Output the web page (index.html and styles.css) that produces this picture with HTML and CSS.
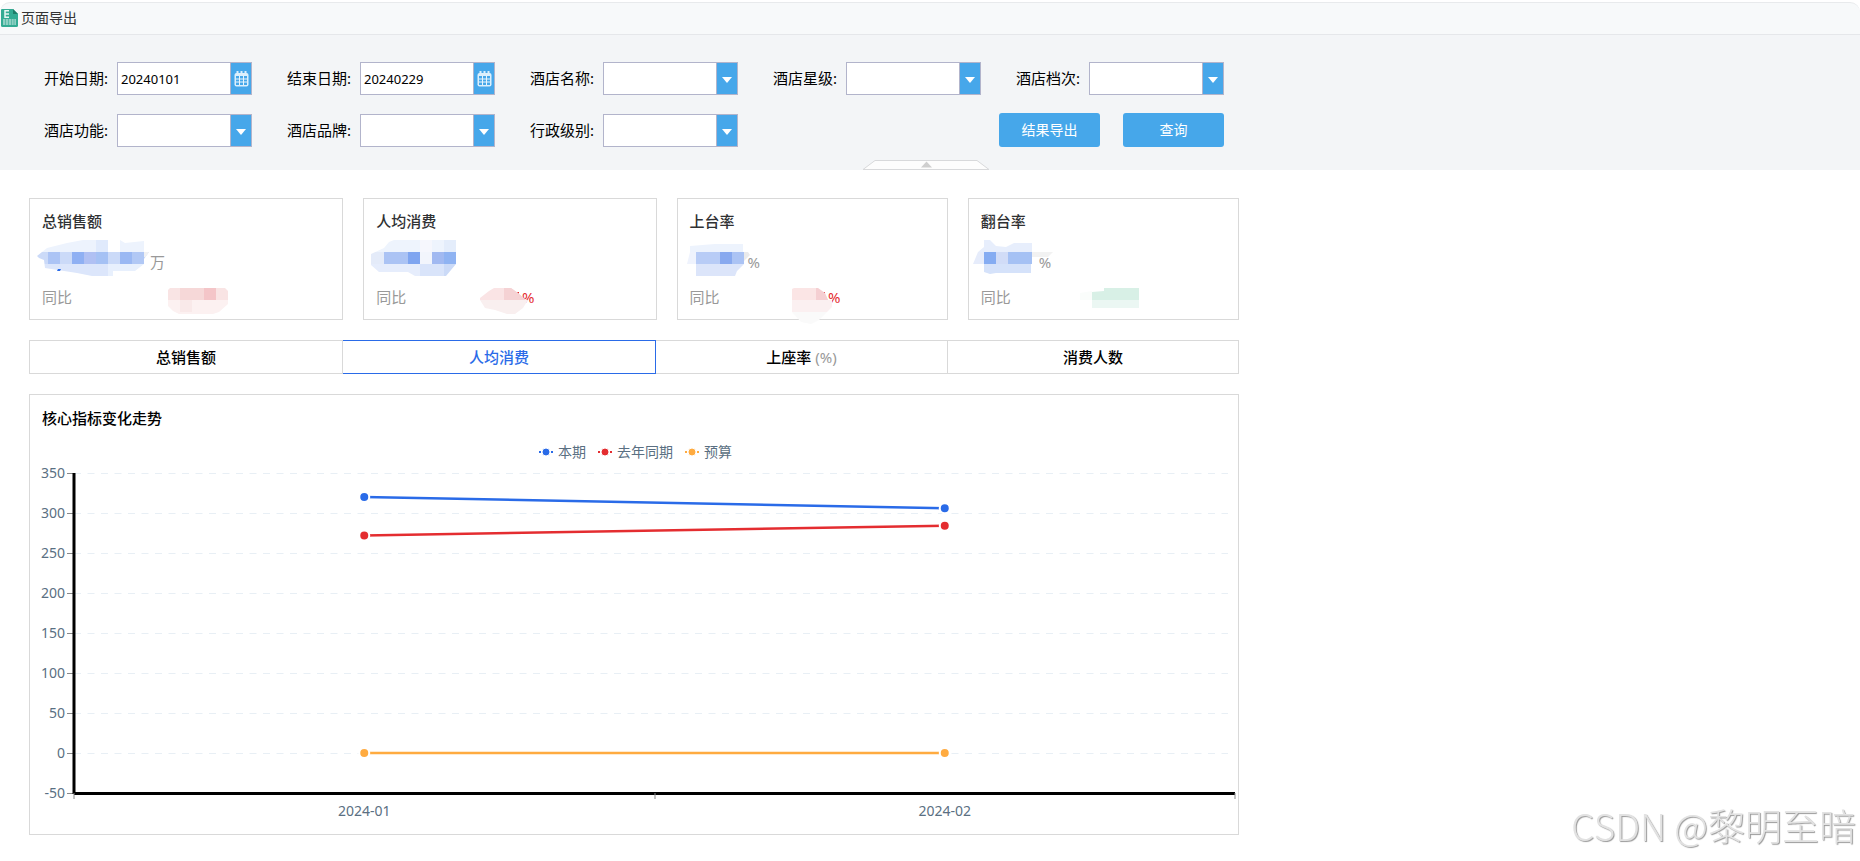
FILE: index.html
```html
<!DOCTYPE html>
<html lang="zh-CN">
<head>
    <meta charset="UTF-8">
    <meta name="viewport" content="width=device-width, initial-scale=1.0">
    <title>页面导出</title>
    <link rel="stylesheet" href="styles.css">
</head>
<body>
    <!-- 工具栏 -->
    <header class="toolbar">
        <a class="export-link" href="#">
            <svg class="export-icon" viewBox="0 0 17 18" width="17" height="18">
                <path fill="#33ab93" d="M1 0h11l5 5v11.500a1.500 1.500 0 0 1-1.500 1.500h-14A1.500 1.500 0 0 1 0 16.500V1a1 1 0 0 1 1-1z"/>
                <path fill="#1d7d69" d="M12 0l5 5h-5z"/>
                <path fill="none" stroke="#e6f6f2" stroke-width="1.500" d="M8 1.800H4v6.400h4M4 5h4"/>
                <path fill="#8fd0c3" d="M2 10h13v6H2z"/>
                <path fill="none" stroke="#5bb9a7" d="M4.500 10v6M7.500 10v6M10.500 10v6M13 10v6"/>
            </svg>
            <span>页面导出</span>
        </a>
    </header>

    <!-- 查询条件 -->
    <form class="query-panel">
        <div class="query-grid">
            <div class="field">
                <label for="start-date">开始日期:</label>
                <div class="control">
                    <input type="text" id="start-date" value="20240101">
                    <button type="button" class="control-btn" aria-label="选择开始日期">
                        <svg viewBox="0 0 15 16" width="15" height="16">
                            <rect x="0.500" y="2" width="14" height="13.500" rx="2" fill="#dceffc"/>
                            <path stroke="#dceffc" stroke-width="2" d="M3.500 0v3M7.500 0v3M11.500 0v3"/>
                            <path fill="#46a7ea" d="M2 5h11v9H2z"/>
                            <path fill="none" stroke="#e8f5fd" d="M2 8h11M2 11h11M5.500 5v9M9.500 5v9"/>
                        </svg>
                    </button>
                </div>
            </div>
            <div class="field">
                <label for="end-date">结束日期:</label>
                <div class="control">
                    <input type="text" id="end-date" value="20240229">
                    <button type="button" class="control-btn" aria-label="选择结束日期">
                        <svg viewBox="0 0 15 16" width="15" height="16">
                            <rect x="0.500" y="2" width="14" height="13.500" rx="2" fill="#dceffc"/>
                            <path stroke="#dceffc" stroke-width="2" d="M3.500 0v3M7.500 0v3M11.500 0v3"/>
                            <path fill="#46a7ea" d="M2 5h11v9H2z"/>
                            <path fill="none" stroke="#e8f5fd" d="M2 8h11M2 11h11M5.500 5v9M9.500 5v9"/>
                        </svg>
                    </button>
                </div>
            </div>
            <div class="field">
                <label for="hotel-name">酒店名称:</label>
                <div class="control select"><select id="hotel-name"><option></option></select></div>
            </div>
            <div class="field">
                <label for="hotel-star">酒店星级:</label>
                <div class="control select"><select id="hotel-star"><option></option></select></div>
            </div>
            <div class="field">
                <label for="hotel-grade">酒店档次:</label>
                <div class="control select"><select id="hotel-grade"><option></option></select></div>
            </div>
            <div class="field">
                <label for="hotel-func">酒店功能:</label>
                <div class="control select"><select id="hotel-func"><option></option></select></div>
            </div>
            <div class="field">
                <label for="hotel-brand">酒店品牌:</label>
                <div class="control select"><select id="hotel-brand"><option></option></select></div>
            </div>
            <div class="field">
                <label for="admin-level">行政级别:</label>
                <div class="control select"><select id="admin-level"><option></option></select></div>
            </div>
            <div class="actions">
                <button type="button" class="btn">结果导出</button>
                <button type="button" class="btn">查询</button>
            </div>
        </div>
        <button type="button" class="collapse-btn" aria-label="收起">
            <svg viewBox="0 0 128 10" width="128" height="10">
                <path fill="#fdfdfd" stroke="#d8d9db" d="M1 9.500L13 0.500H115L127 9.500z"/>
                <path fill="#cfcfcf" d="M59 7.500l5.500-6 5.500 6z"/>
            </svg>
        </button>
    </form>

    <main class="report">
        <!-- 指标卡片 -->
        <section class="cards">
            <div class="card">
                <h3>总销售额</h3>
                <div class="value">
                    <svg viewBox="0 0 113 36" width="113" height="36">
                        <clipPath id="v1"><path d="M0 16L10 8L30 3L46 0H71V12H83V0L88 3L107 1V12H112L107 19V24L98 31H76V36H55L40 33L8 28L7 20L2 18z"/></clipPath>
                        <g clip-path="url(#v1)">
                            <path fill="#edf3fd" d="M0 0h113v12H0z"/><path fill="#e0eafc" d="M59 0h12v12H59z"/>
                            <path fill="#cbdaf8" d="M0 12h113v12H0z"/><path fill="#acc4f5" d="M11 12h12v12H11z"/>
                            <path fill="#8fb0f3" d="M35 12h12v12H35z"/><path fill="#b0c0f3" d="M47 12h12v12H47z"/>
                            <path fill="#a5c1f4" d="M59 12h12v12H59z"/><path fill="#9ab8f3" d="M83 12h12v12H83z"/>
                            <path fill="#b1c8f5" d="M95 12h12v12H95z"/><path fill="#dce6fb" d="M0 24h71v12H0z"/>
                            <path fill="#e8f0fd" d="M71 24h42v12H71z"/><path fill="#f1f1f2" d="M107 12h6v5h-6z"/>
                        </g>
                        <path fill="#2a6be8" d="M20 31h3l1-2h-3z"/>
                    </svg>
                    <span>万</span>
                </div>
                <div class="compare">
                    <span>同比</span>
                    <svg viewBox="0 0 100 26" width="100" height="26">
                        <clipPath id="r1"><path d="M31 0H86L89 3V16L80 24L74 26H40L34 23L29 18V2z"/></clipPath>
                        <g clip-path="url(#r1)">
                            <path fill="#f9e4e4" d="M29 0h60v12H29z"/><path fill="#f6d8d8" d="M41 0h24v12H41z"/>
                            <path fill="#f4c5c8" d="M65 0h12v12H65z"/><path fill="#fcf1f1" d="M29 12h60v14H29z"/>
                            <path fill="#f9e9e9" d="M41 12h12v12H41z"/>
                        </g>
                    </svg>
                </div>
            </div>
            <div class="card">
                <h3>人均消费</h3>
                <div class="value">
                    <svg viewBox="0 0 86 36" width="86" height="36">
                        <clipPath id="v2"><path d="M0 14L13 8L18 2L23 0H85V24L75 36H44L37 32H8L0 25z"/></clipPath>
                        <g clip-path="url(#v2)">
                            <path fill="#eef4fd" d="M0 0h86v12H0z"/><path fill="#f6f7fd" d="M49 0h12v12H49z"/>
                            <path fill="#e4edfb" d="M73 0h12v12H73z"/><path fill="#e4ebf9" d="M0 12h13v12H0z"/>
                            <path fill="#abc3f4" d="M13 12h24v12H13z"/><path fill="#7fa5f0" d="M37 12h12v12H37z"/>
                            <path fill="#f2f5fc" d="M49 12h12v12H49z"/><path fill="#a1b9f1" d="M61 12h12v12H61z"/>
                            <path fill="#8fb3f2" d="M73 12h12v12H73z"/><path fill="#e6edfc" d="M0 24h49v12H0z"/>
                            <path fill="#d9e4fa" d="M49 24h24v12H49z"/><path fill="#cbdaf7" d="M73 24h12v12H73z"/>
                        </g>
                    </svg>
                </div>
                <div class="compare">
                    <span>同比</span>
                    <svg viewBox="0 0 100 26" width="100" height="26">
                        <text x="49" y="15" class="rate">%</text>
                        <path fill="#e42d30" d="M44 4h2v3h-2z"/>
                        <path fill="#fae4e5" d="M7 10L16 3L21 0H38L45 5L53 12H7z"/>
                        <path fill="#f5d2d4" d="M31 0h7l7 5 8 7H31z"/>
                        <path fill="#f9efef" d="M7 12H55L50 20L42 26H34L22 22L12 20z"/>
                    </svg>
                </div>
            </div>
            <div class="card">
                <h3>上台率</h3>
                <div class="value">
                    <svg viewBox="0 0 63 36" width="63" height="36">
                        <path fill="#edf3fd" d="M5 6L30 4H58V12H5z"/>
                        <path fill="#eff3fd" d="M5 12h6v12H2z"/>
                        <path fill="#b8ccf6" d="M11 12h24v12H11z"/><path fill="#88a9ef" d="M35 12h12v12H35z"/>
                        <path fill="#abc3f4" d="M47 12h12v12H47z"/><path fill="#eaeaeb" d="M59 12h4l2 3-4 4-2 2z"/>
                        <path fill="#dce5fa" d="M11 24H59L52 31L50 36H11z"/>
                    </svg>
                    <span>%</span>
                </div>
                <div class="compare">
                    <span>同比</span>
                    <svg viewBox="0 0 100 26" width="100" height="26">
                        <text x="41" y="15" class="rate">%</text>
                        <path fill="#e42d30" d="M36 4h2v3h-2z"/>
                        <path fill="#fbe5e5" d="M5 1L7 0H30L38 6L41 12H5z"/>
                        <path fill="#f5cfd2" d="M29 0h2l7 5 3 7H29z"/>
                        <path fill="#fbf0f1" d="M5 12H45V19L40 24H5z"/>
                        <path fill="#fafafa" d="M5 24H40L32 32L24 36L14 34z"/>
                    </svg>
                </div>
            </div>
            <div class="card">
                <h3>翻台率</h3>
                <div class="value">
                    <svg viewBox="0 0 63 36" width="63" height="36">
                        <path fill="#e7eefc" d="M8 0H14L20 6L30 7L38 3H56V12H2L8 7z"/>
                        <path fill="#e6ecfb" d="M2 12h6v12H-3z"/>
                        <path fill="#85acf2" d="M8 12h12v12H8z"/><path fill="#d1dcf7" d="M20 12h12v12H20z"/>
                        <path fill="#a5c1f4" d="M32 12h24v12H32z"/><path fill="#f2f2f2" d="M56 12H77L72 17H56z"/>
                        <path fill="#d5e2fa" d="M8 24H55V33H20L14 34L8 32z"/>
                    </svg>
                    <span>%</span>
                </div>
                <div class="compare">
                    <span>同比</span>
                    <svg viewBox="0 0 100 26" width="100" height="26">
                        <path fill="#fafdfb" d="M2 5L14 3V12H2z"/>
                        <path fill="#d8f0e6" d="M14 4L26 3V0H61V12H14z"/>
                        <path fill="#ebf7f3" d="M14 12H61V20H14z"/>
                    </svg>
                </div>
            </div>
        </section>

        <!-- 指标切换 -->
        <nav class="tabs">
            <button type="button" class="tab">总销售额</button>
            <button type="button" class="tab active">人均消费</button>
            <button type="button" class="tab">上座率 <small>(%)</small></button>
            <button type="button" class="tab">消费人数</button>
        </nav>

        <!-- 走势图 -->
        <section class="chart-box">
            <h3>核心指标变化走势</h3>
            <div class="legend">
                <span class="legend-item"><svg viewBox="0 0 14 8" width="14" height="8"><path stroke="#2a6be8" stroke-width="2" stroke-dasharray="2 1" d="M0 4h14"/><circle cx="7" cy="4" r="4" fill="#2a6be8" stroke="#fff"/></svg>本期</span>
                <span class="legend-item"><svg viewBox="0 0 14 8" width="14" height="8"><path stroke="#e42d30" stroke-width="2" stroke-dasharray="2 1" d="M0 4h14"/><circle cx="7" cy="4" r="4" fill="#e42d30" stroke="#fff"/></svg>去年同期</span>
                <span class="legend-item"><svg viewBox="0 0 14 8" width="14" height="8"><path stroke="#ffab40" stroke-width="2" stroke-dasharray="2 1" d="M0 4h14"/><circle cx="7" cy="4" r="4" fill="#ffab40" stroke="#fff"/></svg>预算</span>
            </div>
            <svg class="chart" id="chart" viewBox="0 0 1208 372"></svg>
        </section>
    </main>

    <div class="watermark">CSDN @黎明至暗</div>

    <script>
        // 图表数据
        const months = ['2024-01', '2024-02'];
        const series = [
            { color: '#2a6be8', data: [320, 306] },
            { color: '#e42d30', data: [272, 284] },
            { color: '#ffab40', data: [0, 0] }
        ];

        // 绘图区
        const area = { left: 44, right: 1205, top: 11, bottom: 331 };
        const max = 350, min = -50;
        const yPos = v => area.top + (max - v) * (area.bottom - area.top) / (max - min);
        const step = (area.right - area.left) / months.length;
        const xPos = i => area.left + step * (i + 0.5);

        let html = '';

        // 刻度和网格线
        for (let v = max; v >= min; v -= 50) {
            const y = Math.round(yPos(v)) + 0.5;
            html += `<text class="axis-text" x="35" y="${y + 4}" text-anchor="end">${v}</text>`;
            html += `<line class="tick" x1="37" y1="${y}" x2="${area.left}" y2="${y}"/>`;
            if (v > min) {
                html += `<line class="grid-line" x1="${area.left}" y1="${y}" x2="1198" y2="${y}"/>`;
            }
        }

        // 坐标轴
        html += `<path class="axis" d="M${area.left} ${area.top}V${area.bottom + 1}M${area.left} ${area.bottom + 0.5}H${area.right}"/>`;
        for (let i = 0; i <= months.length; i++) {
            const x = Math.round(area.left + step * i);
            html += `<line class="tick" x1="${x}" y1="${area.bottom}" x2="${x}" y2="${area.bottom + 6}"/>`;
        }
        months.forEach((m, i) => {
            html += `<text class="axis-text" x="${xPos(i)}" y="${area.bottom + 23}" text-anchor="middle">${m}</text>`;
        });

        // 折线
        series.forEach(s => {
            const points = s.data.map((v, i) => [xPos(i), yPos(v)]);
            html += `<polyline class="line" stroke="${s.color}" points="${points.join(' ')}"/>`;
            points.forEach(p => {
                html += `<circle class="dot" cx="${p[0]}" cy="${p[1]}" r="5" fill="${s.color}"/>`;
            });
        });

        document.getElementById('chart').innerHTML = html;
    </script>
</body>
</html>
```

FILE: styles.css
```css
* {
    margin: 0;
    padding: 0;
    box-sizing: border-box;
}

body {
    font-family: "Noto Sans", "Noto Sans CJK SC", sans-serif;
    font-size: 15px;
    background: #fff;
    color: #000;
    min-height: 100vh;
}

button,
input,
select {
    font: inherit;
}

/* 工具栏 */
.toolbar {
    height: 33px;
    margin-top: 2px;
    background: #f7f9fa;
    border-top: 1px solid #e8eaec;
    border-bottom: 1px solid #e5e7ea;
    border-radius: 10px 10px 0 0;
    display: flex;
    align-items: center;
    padding-left: 1px;
}

.export-link {
    display: flex;
    align-items: center;
    gap: 3px;
    font-size: 14px;
    line-height: 18px;
    padding-bottom: 1px;
    color: #333;
    text-decoration: none;
}

/* 查询条件 */
.query-panel {
    position: relative;
    background: #f3f5f7;
    padding: 27px 44px 23px;
}

.query-grid {
    display: grid;
    grid-template-columns: repeat(5, 208px);
    column-gap: 35px;
    row-gap: 18px;
}

.field {
    display: flex;
    align-items: center;
    justify-content: space-between;
    white-space: nowrap;
}

.field label {
    padding-bottom: 2px;
}

.control {
    position: relative;
    display: flex;
    width: 135px;
    height: 33px;
    border: 1px solid #b2b4cb;
    background: #fff;
}

.control input {
    flex: 1;
    min-width: 0;
    border: none;
    padding-left: 3px;
    font-size: 13px;
    outline: none;
}

.control-btn {
    width: 21px;
    border: none;
    border-left: 1px solid #b2b4cb;
    background: #46a7ea;
    display: flex;
    align-items: center;
    justify-content: center;
}

.select select {
    width: 100%;
    border: none;
    background: transparent;
    appearance: none;
}

.select {
    background: linear-gradient(to left, #46a7ea 20px, #b2b4cb 20px, #b2b4cb 21px, #fff 21px);
}

.select::after {
    content: "";
    position: absolute;
    right: 5px;
    top: 14px;
    border: 5px solid transparent;
    border-top: 6px solid #fff;
    border-bottom: none;
    pointer-events: none;
}

.actions {
    grid-column: 4 / 6;
    display: flex;
    justify-content: flex-end;
    gap: 23px;
}

.btn {
    width: 101px;
    height: 34px;
    border: none;
    border-radius: 3px;
    background: #46a7ea;
    color: #fff;
    font-size: 14px;
    padding-bottom: 2px;
    cursor: pointer;
}

.collapse-btn {
    position: absolute;
    left: 50%;
    bottom: 0;
    margin-left: -68px;
    border: none;
    background: none;
    cursor: pointer;
}

.collapse-btn svg {
    display: block;
}

/* 报表内容 */
.report {
    max-width: 1268px;
    padding: 28px 29px 0;
}

.cards {
    display: grid;
    grid-template-columns: 314fr 293fr 271fr 271fr;
    gap: 20px;
    margin-bottom: 20px;
}

.card {
    height: 122px;
    border: 1px solid #d9d9d9;
    padding: 11px 12px 0;
}

.card h3 {
    font-size: 15px;
    line-height: 22px;
    font-weight: 500;
    color: #303133;
}

.value {
    display: flex;
    margin: 8px 0 0 -5px;
    height: 36px;
    color: #999;
}

.value svg,
.compare svg {
    overflow: visible;
    flex: none;
}

.value span {
    line-height: 22px;
    margin-top: 11px;
}

.compare {
    display: flex;
    margin-top: 12px;
    color: #999;
}

.compare span {
    width: 97px;
    line-height: 18px;
}

.rate {
    fill: #e42d30;
    font-size: 15px;
}

/* 指标切换 */
.tabs {
    display: grid;
    grid-template-columns: 314fr 313fr 292fr 291fr;
    margin-bottom: 20px;
}

.tab {
    height: 34px;
    border: 1px solid #d9d9d9;
    border-left: none;
    background: #fff;
    font-size: 15px;
    font-weight: 500;
    padding-bottom: 2px;
    cursor: pointer;
}

.tab:first-child {
    border-left: 1px solid #d9d9d9;
}

.tab small {
    font-size: 15px;
    font-weight: 400;
    color: #999;
}

.tab.active {
    border-color: #2a6be8;
    color: #2a6be8;
}

/* 走势图 */
.chart-box {
    border: 1px solid #d9d9d9;
    padding-top: 12px;
}

.chart-box h3 {
    font-size: 15px;
    line-height: 22px;
    font-weight: 500;
    padding-left: 12px;
}

.legend {
    display: flex;
    justify-content: center;
    gap: 12px;
    margin-top: 13px;
    padding-left: 3px;
    height: 20px;
    line-height: 20px;
    font-size: 14px;
    color: #5a6f82;
}

.legend-item {
    display: flex;
    align-items: center;
    gap: 5px;
}

.chart {
    display: block;
    width: 100%;
}

.axis {
    fill: none;
    stroke: #000;
    stroke-width: 3;
}

.axis-text {
    fill: #5a6f82;
    font-size: 14px;
}

.tick {
    stroke: #888;
}

.grid-line {
    stroke: #e8eff5;
    stroke-dasharray: 7 6.5;
}

.line {
    fill: none;
    stroke-width: 2.5;
}

.dot {
    stroke: #fff;
    stroke-width: 2;
}

.watermark {
    position: fixed;
    right: 4px;
    bottom: 11px;
    font-family: "Noto Sans CJK SC", sans-serif;
    font-size: 37px;
    font-weight: 300;
    line-height: 50px;
    color: #e2e2e2;
    text-shadow: 1px 1px 1px #999;
}
```
